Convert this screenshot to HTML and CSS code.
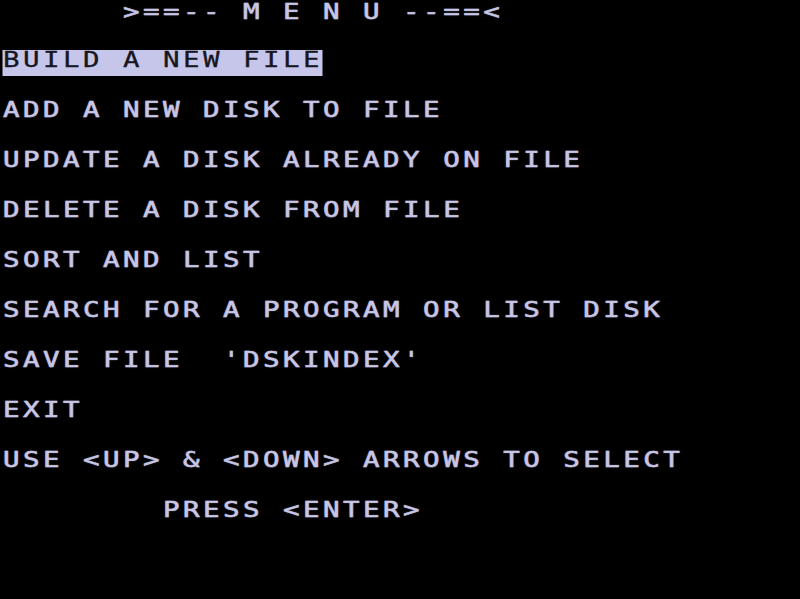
FILE: index.html
```html
<!DOCTYPE html>
<html lang="en">
<head>
<meta charset="utf-8">
<title>Menu</title>
<link rel="stylesheet" href="styles.css">
</head>
<body>
<main class="screen">
  <div class="line title">      &gt;==-- M E N U --==&lt;</div>
  <ul class="menu">
    <li class="line"><span class="selected">BUILD A NEW FILE</span></li>
    <li class="line">ADD A NEW DISK TO FILE</li>
    <li class="line">UPDATE A DISK ALREADY ON FILE</li>
    <li class="line">DELETE A DISK FROM FILE</li>
    <li class="line">SORT AND LIST</li>
    <li class="line">SEARCH FOR A PROGRAM OR LIST DISK</li>
    <li class="line">SAVE FILE  'DSKINDEX'</li>
    <li class="line">EXIT</li>
  </ul>
  <p class="line">USE &lt;UP&gt; &amp; &lt;DOWN&gt; ARROWS TO SELECT</p>
  <p class="line">        PRESS &lt;ENTER&gt;</p>
</main>
</body>
</html>
```

FILE: styles.css
```css
html, body {
  margin: 0;
  padding: 0;
  background: #000;
  height: 100%;
  overflow: hidden;
}

.screen {
  width: 640px;
  padding: 2.4px 0 0 2.4px;
  box-sizing: border-box;
  transform: scaleX(1.25);
  transform-origin: 0 0;
  display: flex;
  flex-direction: column;
  gap: 24px;
  font-family: "DejaVu Sans Mono", monospace;
  font-size: 22px;
  letter-spacing: 2.76px;
  color: #c8c6e6;
  -webkit-text-stroke: 0.5px #c8c6e6;
  text-shadow: 0 0 1.5px rgba(200, 198, 230, 0.55);
}

.title {
  margin-bottom: -2.4px;
}

.menu {
  list-style: none;
  margin: 0;
  padding: 0;
  display: flex;
  flex-direction: column;
  gap: 24px;
}

.line {
  height: 26px;
  line-height: 20.8px;
  white-space: pre;
}

p.line,
li.line {
  margin: 0;
}

.selected {
  display: inline-block;
  height: 26px;
  vertical-align: top;
  background: #c6c6ea;
  color: #16161e;
  -webkit-text-stroke: 0.3px #16161e;
  text-shadow: none;
}
```
